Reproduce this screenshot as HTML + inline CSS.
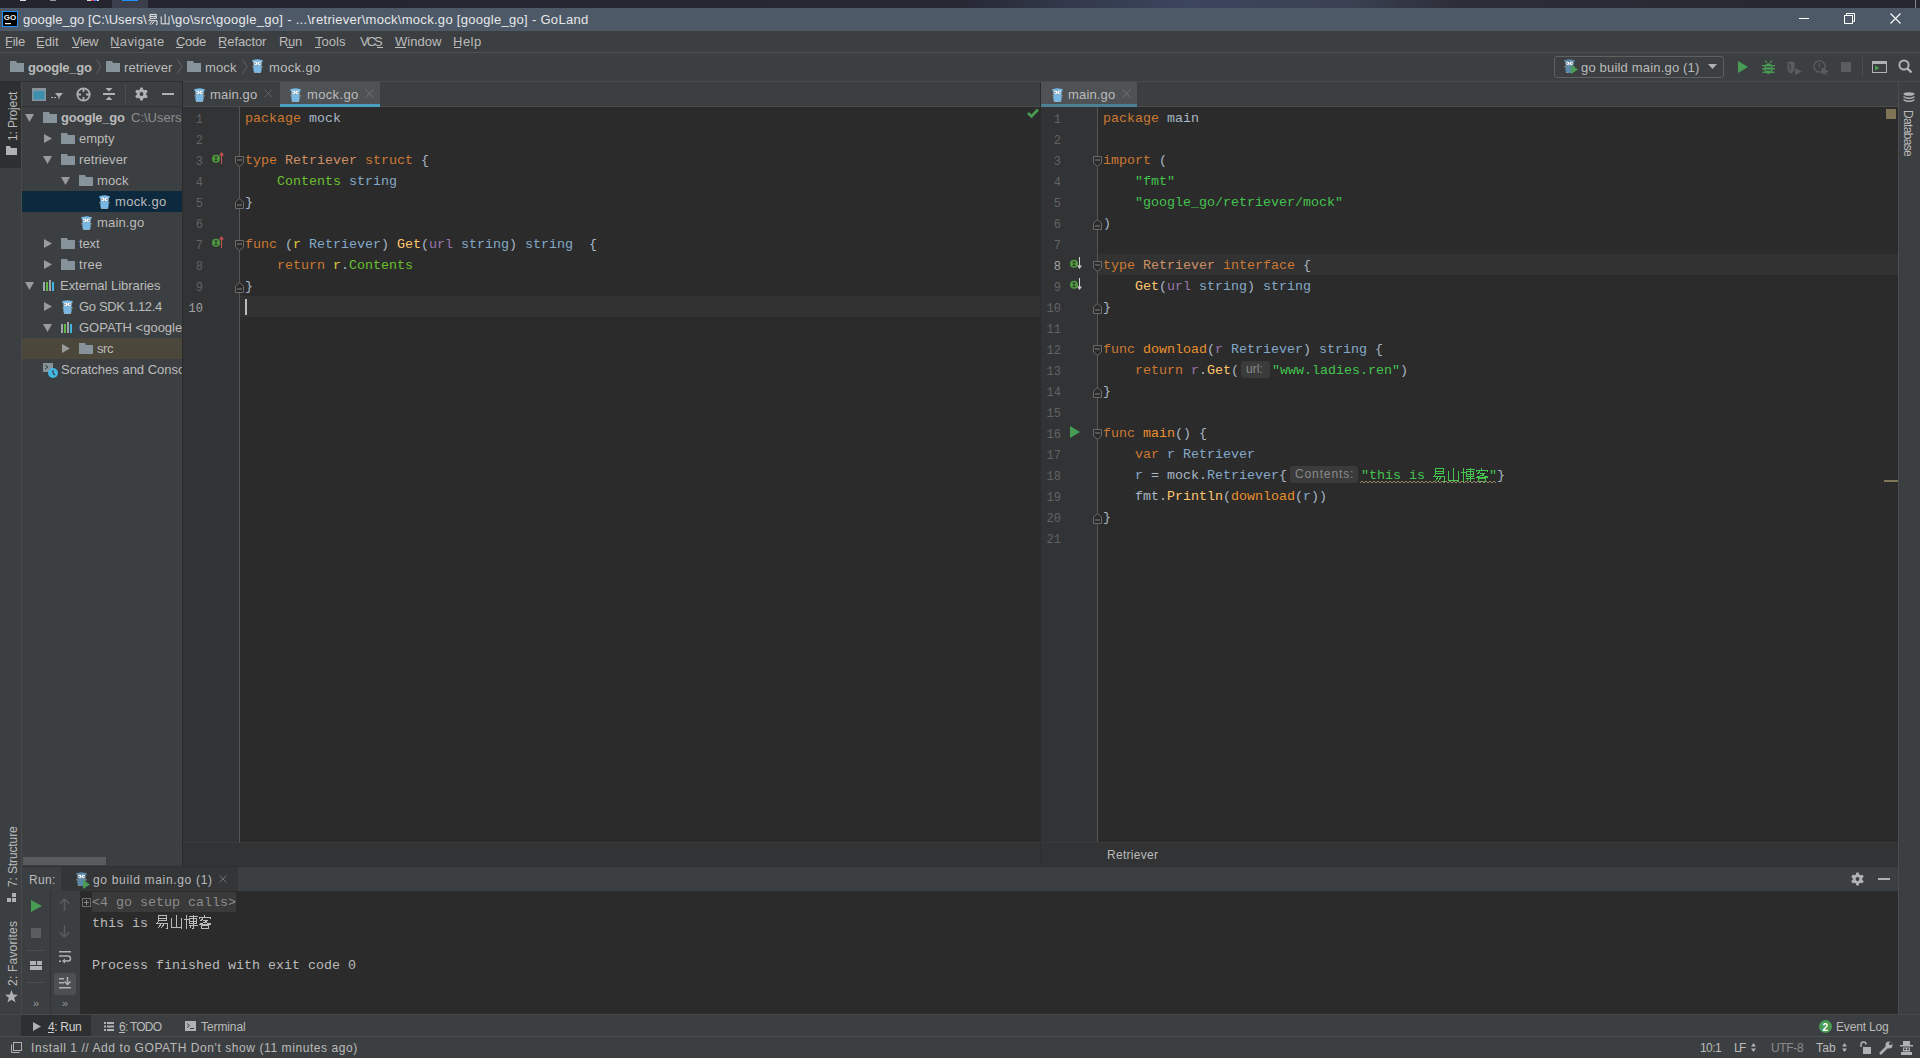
<!DOCTYPE html>
<html><head><meta charset="utf-8">
<style>
*{margin:0;padding:0;box-sizing:border-box}
html,body{width:1920px;height:1058px;overflow:hidden;background:#3c3f41;font-family:"Liberation Sans",sans-serif;color:#bbbbbb}
.a{position:absolute}
.ui{font-family:"Liberation Sans",sans-serif;white-space:pre}
.mono{font-family:"Liberation Mono",monospace;font-size:13.333px;white-space:pre;line-height:21px}
svg{overflow:visible}
</style></head><body>
<div class="a" style="left:0px;top:0px;width:1920px;height:8px;background:linear-gradient(90deg,#23242e 0%,#262834 50%,#333a4c 56%,#3c455e 62%,#3a4152 70%,#2c2d38 76%,#25262f 100%);"></div>
<div class="a" style="left:112px;top:0px;width:36px;height:8px;background:#3b3f4b;"></div>
<div class="a" style="left:122px;top:0px;width:16px;height:1px;background:#1e90ff;"></div>
<div class="a" style="left:20px;top:0px;width:6px;height:1px;background:#dddddd;"></div>
<div class="a" style="left:50px;top:0px;width:6px;height:1px;background:#999;"></div>
<div class="a" style="left:87px;top:0px;width:12px;height:1px;background:#ddd;"></div>
<div class="a" style="left:91px;top:0px;width:3px;height:1px;background:#e04050;"></div>
<div class="a" style="left:94px;top:0px;width:3px;height:1px;background:#4080ff;"></div>
<div class="a" style="left:1915px;top:0px;width:1px;height:8px;background:#888;"></div>
<div class="a" style="left:0px;top:8px;width:1920px;height:23px;background:#4e5968;"></div>
<div class="a" style="left:0px;top:31px;width:1920px;height:21px;background:#3c3f41;"></div>
<div class="a" style="left:0px;top:52px;width:1920px;height:1px;background:#505050;"></div>
<div class="a" style="left:0px;top:53px;width:1920px;height:28px;background:#3c3f41;"></div>
<div class="a" style="left:0px;top:81px;width:183px;height:1px;background:#2f3030;"></div>
<div class="a" style="left:183px;top:81px;width:1737px;height:1px;background:#4a4a4a;"></div>
<div class="a" style="left:0px;top:82px;width:21px;height:955px;background:#3c3f41;"></div>
<div class="a" style="left:0px;top:82px;width:21px;height:86px;background:#2d2f30;"></div>
<div class="a" style="left:21px;top:82px;width:1px;height:932px;background:#4a4a4a;"></div>
<div class="a" style="left:22px;top:82px;width:160px;height:784px;background:#3c3f41;"></div>
<div class="a" style="left:22px;top:106px;width:160px;height:1px;background:#323232;"></div>
<div class="a" style="left:22px;top:191px;width:160px;height:21px;background:#0d293e;"></div>
<div class="a" style="left:22px;top:338px;width:160px;height:21px;background:#4b473b;"></div>
<div class="a" style="left:23px;top:857px;width:83px;height:8px;background:#595b5d;"></div>
<div class="a" style="left:182px;top:82px;width:1px;height:784px;background:#2b2b2b;"></div>
<div class="a" style="left:183px;top:82px;width:857px;height:24px;background:#3c3f41;"></div>
<div class="a" style="left:183px;top:106px;width:857px;height:1px;background:#4a4a4a;"></div>
<div class="a" style="left:280px;top:82px;width:100px;height:22px;background:#4e5254;"></div>
<div class="a" style="left:280px;top:104px;width:100px;height:3px;background:#4a9fc3;"></div>
<div class="a" style="left:183px;top:107px;width:56px;height:735px;background:#313335;"></div>
<div class="a" style="left:239px;top:107px;width:1px;height:735px;background:#555555;"></div>
<div class="a" style="left:240px;top:107px;width:800px;height:735px;background:#2b2b2b;"></div>
<div class="a" style="left:240px;top:296px;width:800px;height:21px;background:#323232;"></div>
<div class="a" style="left:1040px;top:82px;width:1px;height:760px;background:#2b2b2b;"></div>
<div class="a" style="left:1041px;top:82px;width:857px;height:24px;background:#3c3f41;"></div>
<div class="a" style="left:1041px;top:106px;width:857px;height:1px;background:#4a4a4a;"></div>
<div class="a" style="left:1041px;top:82px;width:96px;height:22px;background:#4e5254;"></div>
<div class="a" style="left:1041px;top:104px;width:96px;height:3px;background:#4e8093;"></div>
<div class="a" style="left:1041px;top:107px;width:56px;height:735px;background:#313335;"></div>
<div class="a" style="left:1097px;top:107px;width:1px;height:735px;background:#555555;"></div>
<div class="a" style="left:1098px;top:107px;width:800px;height:735px;background:#2b2b2b;"></div>
<div class="a" style="left:1098px;top:254px;width:800px;height:21px;background:#323232;"></div>
<div class="a" style="left:1886px;top:109px;width:10px;height:10px;background:#7f7456;"></div>
<div class="a" style="left:1884px;top:480px;width:14px;height:2px;background:#7f7757;"></div>
<div class="a" style="left:183px;top:842px;width:1715px;height:24px;background:#313335;"></div>
<div class="a" style="left:183px;top:842px;width:1715px;height:1px;background:#3a3a3a;"></div>
<div class="a" style="left:1040px;top:842px;width:1px;height:24px;background:#2f3030;"></div>
<div class="a" style="left:1898px;top:82px;width:22px;height:932px;background:#3c3f41;"></div>
<div class="a" style="left:1898px;top:82px;width:1px;height:932px;background:#4a4c4e;"></div>
<div class="a" style="left:22px;top:866px;width:1876px;height:1px;background:#2f3030;"></div>
<div class="a" style="left:22px;top:867px;width:1876px;height:24px;background:#3c3f41;"></div>
<div class="a" style="left:61px;top:867px;width:177px;height:24px;background:#333537;"></div>
<div class="a" style="left:22px;top:891px;width:58px;height:123px;background:#3c3f41;"></div>
<div class="a" style="left:50px;top:891px;width:1px;height:123px;background:#333333;"></div>
<div class="a" style="left:80px;top:891px;width:1818px;height:123px;background:#2b2b2b;"></div>
<div class="a" style="left:92px;top:892px;width:144px;height:20px;background:#3a3a3a;"></div>
<div class="a" style="left:54px;top:973px;width:22px;height:22px;background:#4c5052;border-radius:3px"></div>
<div class="a" style="left:0px;top:1014px;width:1920px;height:1px;background:#46484a;"></div>
<div class="a" style="left:0px;top:1015px;width:1920px;height:21px;background:#3c3f41;"></div>
<div class="a" style="left:21px;top:1015px;width:70px;height:21px;background:#2d2f30;"></div>
<div class="a" style="left:0px;top:1036px;width:1920px;height:1px;background:#4a4c4e;"></div>
<div class="a" style="left:0px;top:1037px;width:1920px;height:21px;background:#3c3f41;"></div>
<svg class="a" style="left:2px;top:11px" width="16" height="16" viewBox="0 0 16 16"><rect x="0.5" y="0.5" width="15" height="15" fill="#000" stroke="#1e90ff"/><text x="1.8" y="9" font-family="Liberation Sans" font-weight="bold" font-size="8" fill="#eee">GO</text><rect x="3" y="12" width="6" height="1.2" fill="#eee"/></svg>
<div class="a" style="left:1799px;top:18px;width:10px;height:1px;background:#ffffff;"></div>
<svg class="a" style="left:1844px;top:13px" width="11" height="11" viewBox="0 0 11 11"><rect x="0.5" y="2.5" width="8" height="8" fill="none" stroke="#fff"/><path d="M2.5 2.5 V0.5 H10.5 V8.5 H8.5" fill="none" stroke="#fff"/></svg>
<svg class="a" style="left:1890px;top:13px" width="11" height="11" viewBox="0 0 11 11"><path d="M0.5 0.5 L10.5 10.5 M10.5 0.5 L0.5 10.5" stroke="#fff" stroke-width="1.1"/></svg>
<div class="a" style="left:6px;top:47px;width:6px;height:1px;background:#bbbbbb;"></div>
<div class="a" style="left:37px;top:47px;width:7px;height:1px;background:#bbbbbb;"></div>
<div class="a" style="left:72px;top:47px;width:7px;height:1px;background:#bbbbbb;"></div>
<div class="a" style="left:111px;top:47px;width:9px;height:1px;background:#bbbbbb;"></div>
<div class="a" style="left:176px;top:47px;width:7px;height:1px;background:#bbbbbb;"></div>
<div class="a" style="left:219px;top:47px;width:7px;height:1px;background:#bbbbbb;"></div>
<div class="a" style="left:287px;top:47px;width:6px;height:1px;background:#bbbbbb;"></div>
<div class="a" style="left:315px;top:47px;width:6px;height:1px;background:#bbbbbb;"></div>
<div class="a" style="left:377px;top:47px;width:6px;height:1px;background:#bbbbbb;"></div>
<div class="a" style="left:395px;top:47px;width:11px;height:1px;background:#bbbbbb;"></div>
<div class="a" style="left:454px;top:47px;width:7px;height:1px;background:#bbbbbb;"></div>
<svg class="a" style="left:10px;top:61px" width="14" height="11" viewBox="0 0 14 11"><path d="M0 0 H6 L7 2 H14 V11 H0 Z" fill="#87939a"/></svg>
<svg class="a" style="left:96px;top:59px" width="6" height="15" viewBox="0 0 6 15"><path d="M0.5 0.5 L5 7.5 L0.5 14.5" fill="none" stroke="#5e6060"/></svg>
<svg class="a" style="left:106px;top:61px" width="14" height="11" viewBox="0 0 14 11"><path d="M0 0 H6 L7 2 H14 V11 H0 Z" fill="#87939a"/></svg>
<svg class="a" style="left:177px;top:59px" width="6" height="15" viewBox="0 0 6 15"><path d="M0.5 0.5 L5 7.5 L0.5 14.5" fill="none" stroke="#5e6060"/></svg>
<svg class="a" style="left:187px;top:61px" width="14" height="11" viewBox="0 0 14 11"><path d="M0 0 H6 L7 2 H14 V11 H0 Z" fill="#87939a"/></svg>
<svg class="a" style="left:242px;top:59px" width="6" height="15" viewBox="0 0 6 15"><path d="M0.5 0.5 L5 7.5 L0.5 14.5" fill="none" stroke="#5e6060"/></svg>
<svg class="a" style="left:252px;top:59px" width="11" height="14" viewBox="0 0 11 14"><path d="M0.3 2.2 Q0.3 0.6 1.8 0.9 Q5.5 -0.6 9.2 0.9 Q10.7 0.6 10.7 2.2 Q10.7 3.2 9.6 3.4 V11.2 Q9.6 14 5.5 14 Q1.4 14 1.4 11.2 V3.4 Q0.3 3.2 0.3 2.2 Z" fill="#79b8e3"/><circle cx="3.6" cy="4.3" r="1.7" fill="#fff"/><circle cx="7.4" cy="4.3" r="1.7" fill="#fff"/><rect x="2.6" y="3.6" width="0.9" height="1.5" fill="#333"/><rect x="7.5" y="3.6" width="0.9" height="1.5" fill="#333"/><rect x="4.6" y="5.6" width="1.8" height="1.1" fill="#e8e8e8"/><rect x="4.9" y="6.2" width="1.2" height="0.6" fill="#555"/><rect x="0.4" y="7.2" width="1" height="1.2" fill="#c9a27e"/><rect x="9.6" y="7.2" width="1" height="1.2" fill="#c9a27e"/><rect x="2" y="13" width="1.2" height="1" fill="#c9a27e"/><rect x="7.8" y="13" width="1.2" height="1" fill="#c9a27e"/></svg>
<div class="a" style="left:1554px;top:56px;width:170px;height:22px;background:transparent;border:1px solid #5e6060;border-radius:3px"></div>
<svg class="a" style="left:1564px;top:59px" width="11" height="14" viewBox="0 0 11 14"><path d="M0.3 2.2 Q0.3 0.6 1.8 0.9 Q5.5 -0.6 9.2 0.9 Q10.7 0.6 10.7 2.2 Q10.7 3.2 9.6 3.4 V11.2 Q9.6 14 5.5 14 Q1.4 14 1.4 11.2 V3.4 Q0.3 3.2 0.3 2.2 Z" fill="#5b88a8"/><circle cx="3.6" cy="4.3" r="1.7" fill="#fff"/><circle cx="7.4" cy="4.3" r="1.7" fill="#fff"/><rect x="2.6" y="3.6" width="0.9" height="1.5" fill="#333"/><rect x="7.5" y="3.6" width="0.9" height="1.5" fill="#333"/><rect x="4.6" y="5.6" width="1.8" height="1.1" fill="#e8e8e8"/><rect x="4.9" y="6.2" width="1.2" height="0.6" fill="#555"/><rect x="0.4" y="7.2" width="1" height="1.2" fill="#c9a27e"/><rect x="9.6" y="7.2" width="1" height="1.2" fill="#c9a27e"/><rect x="2" y="13" width="1.2" height="1" fill="#c9a27e"/><rect x="7.8" y="13" width="1.2" height="1" fill="#c9a27e"/></svg>
<svg class="a" style="left:1571px;top:65px" width="7" height="9" viewBox="0 0 7 9"><path d="M0 0 L7 4.5 L0 9 Z" fill="#499c54"/></svg>
<svg class="a" style="left:1708px;top:64px" width="9" height="5" viewBox="0 0 9 5"><path d="M0 0 H9 L4.5 5 Z" fill="#afb1b3"/></svg>
<svg class="a" style="left:1738px;top:61px" width="10" height="12" viewBox="0 0 10 12"><path d="M0 0 L10 6 L0 12 Z" fill="#499c54"/></svg>
<svg class="a" style="left:1762px;top:60px" width="13" height="14" viewBox="0 0 13 14"><g fill="#499c54" stroke="#499c54"><path d="M3 0.5 L5 3 M10 0.5 L8 3" stroke-width="1.2" fill="none"/><ellipse cx="6.5" cy="8.5" rx="4.3" ry="5.2" stroke="none"/><rect x="0" y="5" width="13" height="1.3" stroke="none"/><rect x="0" y="8.3" width="13" height="1.3" stroke="none"/><rect x="0.5" y="11.6" width="12" height="1.3" stroke="none"/></g><rect x="3.5" y="6.3" width="6" height="1.1" fill="#3c3f41"/><rect x="3.5" y="9.6" width="6" height="1.1" fill="#3c3f41"/></svg>
<svg class="a" style="left:1787px;top:61px" width="16" height="14" viewBox="0 0 16 14"><path d="M0.5 1 Q4 0 7.5 1 V7 Q7.5 11 4 12.5 Q0.5 11 0.5 7 Z" fill="#5a5d5f"/><path d="M3 2.5 V9" stroke="#3c3f41" stroke-width="1.3"/><path d="M8 7 L15 10.5 L8 14 Z" fill="#5a5d5f"/></svg>
<svg class="a" style="left:1813px;top:60px" width="17" height="15" viewBox="0 0 17 15"><circle cx="6.5" cy="6.5" r="5.6" fill="none" stroke="#5a5d5f" stroke-width="1.4"/><path d="M6.5 3 V7" stroke="#5a5d5f" fill="none" stroke-width="1.2"/><path d="M8.5 7 L16 12 L12.5 12.5 L14.5 15 L13 15 L11 13 L9 15 Z" fill="#5a5d5f"/></svg>
<div class="a" style="left:1841px;top:62px;width:10px;height:10px;background:#5a5d5f;"></div>
<div class="a" style="left:1862px;top:57px;width:1px;height:20px;background:#4b4d4f;"></div>
<svg class="a" style="left:1872px;top:61px" width="15" height="12" viewBox="0 0 15 12"><rect x="0.5" y="0.5" width="14" height="11" fill="none" stroke="#afb1b3" stroke-width="1"/><rect x="0.5" y="0.5" width="14" height="2.5" fill="#afb1b3"/><path d="M3 4.5 L7.5 7 L3 9.5 Z" fill="#499c54"/></svg>
<svg class="a" style="left:1898px;top:59px" width="15" height="15" viewBox="0 0 15 15"><circle cx="6" cy="6" r="4.6" fill="none" stroke="#afb1b3" stroke-width="2"/><path d="M9.3 9.3 L13.5 13.5" stroke="#afb1b3" stroke-width="2.4"/></svg>
<svg class="a" style="left:6px;top:146px" width="11" height="9" viewBox="0 0 11 9"><path d="M0 0 H4 L5 2 H11 V9 H0 Z" fill="#afb1b3"/></svg>
<svg class="a" style="left:7px;top:893px" width="10" height="9" viewBox="0 0 10 9"><rect x="5" y="0" width="4" height="4" fill="#afb1b3"/><rect x="0" y="5" width="4" height="4" fill="#afb1b3"/><rect x="5" y="5" width="4" height="4" fill="#afb1b3"/></svg>
<svg class="a" style="left:5px;top:990px" width="13" height="13" viewBox="0 0 13 13"><path d="M6.5 0 L8.2 4.6 L13 4.8 L9.2 7.8 L10.6 12.5 L6.5 9.8 L2.4 12.5 L3.8 7.8 L0 4.8 L4.8 4.6 Z" fill="#afb1b3"/></svg>
<svg class="a" style="left:1903px;top:92px" width="12" height="12" viewBox="0 0 12 12"><ellipse cx="6" cy="2" rx="5.5" ry="1.8" fill="#afb1b3"/><path d="M0.5 4 Q6 7 11.5 4 V5.5 Q6 8.5 0.5 5.5 Z M0.5 7 Q6 10 11.5 7 V8.5 Q6 11.5 0.5 8.5 Z" fill="#afb1b3"/></svg>
<svg class="a" style="left:32px;top:88px" width="14" height="13" viewBox="0 0 14 13"><rect x="0" y="0" width="14" height="13" fill="#87939a"/><rect x="1.5" y="3" width="11" height="8.5" fill="#3d8fb0"/></svg>
<div class="a" style="left:51px;top:97px;width:2px;height:1px;background:#afb1b3;"></div>
<div class="a" style="left:54px;top:97px;width:2px;height:1px;background:#afb1b3;"></div>
<svg class="a" style="left:55px;top:93px" width="8" height="6" viewBox="0 0 8 6"><path d="M0 0 H8 L4.5 4 V6 H3.5 V4 Z" fill="#afb1b3"/></svg>
<svg class="a" style="left:76px;top:87px" width="15" height="15" viewBox="0 0 15 15"><circle cx="7.5" cy="7.5" r="6.2" fill="none" stroke="#afb1b3" stroke-width="1.8"/><path d="M7.5 1 V5 M7.5 10 V14 M1 7.5 H5 M10 7.5 H14" stroke="#afb1b3" stroke-width="1.8"/></svg>
<svg class="a" style="left:103px;top:88px" width="12" height="12" viewBox="0 0 12 12"><rect x="0" y="5" width="12" height="2" fill="#afb1b3"/><path d="M2.5 0 H9.5 L6 3.5 Z M2.5 12 H9.5 L6 8.5 Z" fill="#afb1b3"/></svg>
<div class="a" style="left:125px;top:84px;width:1px;height:20px;background:#4b4d4f;"></div>
<svg class="a" style="left:135px;top:87px" width="13" height="14" viewBox="0 0 13 14"><g fill="#afb1b3"><circle cx="6.5" cy="7" r="4.8"/><rect x="5" y="0.5" width="3" height="13" rx="0.8"/><rect x="5" y="0.5" width="3" height="13" rx="0.8" transform="rotate(60 6.5 7)"/><rect x="5" y="0.5" width="3" height="13" rx="0.8" transform="rotate(-60 6.5 7)"/></g><circle cx="6.5" cy="7" r="1.9" fill="#3c3f41"/></svg>
<div class="a" style="left:162px;top:93px;width:12px;height:2px;background:#afb1b3;"></div>
<svg class="a" style="left:25px;top:114px" width="9" height="8" viewBox="0 0 9 8"><path d="M0 0 H9 L4.5 8 Z" fill="#9a9a9a"/></svg>
<svg class="a" style="left:43px;top:112px" width="14" height="11" viewBox="0 0 14 11"><path d="M0 0 H6 L7 2 H14 V11 H0 Z" fill="#87939a"/></svg>
<svg class="a" style="left:44px;top:134px" width="8" height="9" viewBox="0 0 8 9"><path d="M0 0 L8 4.5 L0 9 Z" fill="#9a9a9a"/></svg>
<svg class="a" style="left:61px;top:133px" width="14" height="11" viewBox="0 0 14 11"><path d="M0 0 H6 L7 2 H14 V11 H0 Z" fill="#87939a"/></svg>
<svg class="a" style="left:43px;top:156px" width="9" height="8" viewBox="0 0 9 8"><path d="M0 0 H9 L4.5 8 Z" fill="#9a9a9a"/></svg>
<svg class="a" style="left:61px;top:154px" width="14" height="11" viewBox="0 0 14 11"><path d="M0 0 H6 L7 2 H14 V11 H0 Z" fill="#87939a"/></svg>
<svg class="a" style="left:61px;top:177px" width="9" height="8" viewBox="0 0 9 8"><path d="M0 0 H9 L4.5 8 Z" fill="#9a9a9a"/></svg>
<svg class="a" style="left:79px;top:175px" width="14" height="11" viewBox="0 0 14 11"><path d="M0 0 H6 L7 2 H14 V11 H0 Z" fill="#87939a"/></svg>
<svg class="a" style="left:99px;top:195px" width="11" height="14" viewBox="0 0 11 14"><path d="M0.3 2.2 Q0.3 0.6 1.8 0.9 Q5.5 -0.6 9.2 0.9 Q10.7 0.6 10.7 2.2 Q10.7 3.2 9.6 3.4 V11.2 Q9.6 14 5.5 14 Q1.4 14 1.4 11.2 V3.4 Q0.3 3.2 0.3 2.2 Z" fill="#79b8e3"/><circle cx="3.6" cy="4.3" r="1.7" fill="#fff"/><circle cx="7.4" cy="4.3" r="1.7" fill="#fff"/><rect x="2.6" y="3.6" width="0.9" height="1.5" fill="#333"/><rect x="7.5" y="3.6" width="0.9" height="1.5" fill="#333"/><rect x="4.6" y="5.6" width="1.8" height="1.1" fill="#e8e8e8"/><rect x="4.9" y="6.2" width="1.2" height="0.6" fill="#555"/><rect x="0.4" y="7.2" width="1" height="1.2" fill="#c9a27e"/><rect x="9.6" y="7.2" width="1" height="1.2" fill="#c9a27e"/><rect x="2" y="13" width="1.2" height="1" fill="#c9a27e"/><rect x="7.8" y="13" width="1.2" height="1" fill="#c9a27e"/></svg>
<svg class="a" style="left:81px;top:216px" width="11" height="14" viewBox="0 0 11 14"><path d="M0.3 2.2 Q0.3 0.6 1.8 0.9 Q5.5 -0.6 9.2 0.9 Q10.7 0.6 10.7 2.2 Q10.7 3.2 9.6 3.4 V11.2 Q9.6 14 5.5 14 Q1.4 14 1.4 11.2 V3.4 Q0.3 3.2 0.3 2.2 Z" fill="#79b8e3"/><circle cx="3.6" cy="4.3" r="1.7" fill="#fff"/><circle cx="7.4" cy="4.3" r="1.7" fill="#fff"/><rect x="2.6" y="3.6" width="0.9" height="1.5" fill="#333"/><rect x="7.5" y="3.6" width="0.9" height="1.5" fill="#333"/><rect x="4.6" y="5.6" width="1.8" height="1.1" fill="#e8e8e8"/><rect x="4.9" y="6.2" width="1.2" height="0.6" fill="#555"/><rect x="0.4" y="7.2" width="1" height="1.2" fill="#c9a27e"/><rect x="9.6" y="7.2" width="1" height="1.2" fill="#c9a27e"/><rect x="2" y="13" width="1.2" height="1" fill="#c9a27e"/><rect x="7.8" y="13" width="1.2" height="1" fill="#c9a27e"/></svg>
<svg class="a" style="left:44px;top:239px" width="8" height="9" viewBox="0 0 8 9"><path d="M0 0 L8 4.5 L0 9 Z" fill="#9a9a9a"/></svg>
<svg class="a" style="left:61px;top:238px" width="14" height="11" viewBox="0 0 14 11"><path d="M0 0 H6 L7 2 H14 V11 H0 Z" fill="#87939a"/></svg>
<svg class="a" style="left:44px;top:260px" width="8" height="9" viewBox="0 0 8 9"><path d="M0 0 L8 4.5 L0 9 Z" fill="#9a9a9a"/></svg>
<svg class="a" style="left:61px;top:259px" width="14" height="11" viewBox="0 0 14 11"><path d="M0 0 H6 L7 2 H14 V11 H0 Z" fill="#87939a"/></svg>
<svg class="a" style="left:25px;top:282px" width="9" height="8" viewBox="0 0 9 8"><path d="M0 0 H9 L4.5 8 Z" fill="#9a9a9a"/></svg>
<svg class="a" style="left:43px;top:280px" width="12" height="11" viewBox="0 0 12 11"><rect x="0" y="2" width="2" height="9" fill="#9aa7b0"/><rect x="3" y="2" width="2" height="9" fill="#62b543"/><rect x="6" y="0" width="2" height="11" fill="#9aa7b0"/><rect x="9" y="2" width="2" height="9" fill="#40b6e0"/></svg>
<svg class="a" style="left:44px;top:302px" width="8" height="9" viewBox="0 0 8 9"><path d="M0 0 L8 4.5 L0 9 Z" fill="#9a9a9a"/></svg>
<svg class="a" style="left:62px;top:300px" width="11" height="14" viewBox="0 0 11 14"><path d="M0.3 2.2 Q0.3 0.6 1.8 0.9 Q5.5 -0.6 9.2 0.9 Q10.7 0.6 10.7 2.2 Q10.7 3.2 9.6 3.4 V11.2 Q9.6 14 5.5 14 Q1.4 14 1.4 11.2 V3.4 Q0.3 3.2 0.3 2.2 Z" fill="#79b8e3"/><circle cx="3.6" cy="4.3" r="1.7" fill="#fff"/><circle cx="7.4" cy="4.3" r="1.7" fill="#fff"/><rect x="2.6" y="3.6" width="0.9" height="1.5" fill="#333"/><rect x="7.5" y="3.6" width="0.9" height="1.5" fill="#333"/><rect x="4.6" y="5.6" width="1.8" height="1.1" fill="#e8e8e8"/><rect x="4.9" y="6.2" width="1.2" height="0.6" fill="#555"/><rect x="0.4" y="7.2" width="1" height="1.2" fill="#c9a27e"/><rect x="9.6" y="7.2" width="1" height="1.2" fill="#c9a27e"/><rect x="2" y="13" width="1.2" height="1" fill="#c9a27e"/><rect x="7.8" y="13" width="1.2" height="1" fill="#c9a27e"/></svg>
<svg class="a" style="left:43px;top:324px" width="9" height="8" viewBox="0 0 9 8"><path d="M0 0 H9 L4.5 8 Z" fill="#9a9a9a"/></svg>
<svg class="a" style="left:61px;top:322px" width="12" height="11" viewBox="0 0 12 11"><rect x="0" y="2" width="2" height="9" fill="#9aa7b0"/><rect x="3" y="2" width="2" height="9" fill="#62b543"/><rect x="6" y="0" width="2" height="11" fill="#9aa7b0"/><rect x="9" y="2" width="2" height="9" fill="#40b6e0"/></svg>
<svg class="a" style="left:62px;top:344px" width="8" height="9" viewBox="0 0 8 9"><path d="M0 0 L8 4.5 L0 9 Z" fill="#9a9a9a"/></svg>
<svg class="a" style="left:79px;top:343px" width="14" height="11" viewBox="0 0 14 11"><path d="M0 0 H6 L7 2 H14 V11 H0 Z" fill="#87939a"/></svg>
<svg class="a" style="left:43px;top:363px" width="16" height="16" viewBox="0 0 16 16"><rect x="0" y="0" width="10" height="9" fill="#87939a"/><path d="M2 2 L5 4 L2 6" stroke="#3c3f41" fill="none"/><circle cx="10" cy="10" r="5" fill="#40b6e0"/><path d="M10 7 V10 L12 12" stroke="#3c3f41" fill="none" stroke-width="1.2"/></svg>
<div class="a" style="left:182px;top:82px;width:1px;height:784px;background:#2b2b2b;"></div>
<svg class="a" style="left:194px;top:88px" width="11" height="14" viewBox="0 0 11 14"><path d="M0.3 2.2 Q0.3 0.6 1.8 0.9 Q5.5 -0.6 9.2 0.9 Q10.7 0.6 10.7 2.2 Q10.7 3.2 9.6 3.4 V11.2 Q9.6 14 5.5 14 Q1.4 14 1.4 11.2 V3.4 Q0.3 3.2 0.3 2.2 Z" fill="#79b8e3"/><circle cx="3.6" cy="4.3" r="1.7" fill="#fff"/><circle cx="7.4" cy="4.3" r="1.7" fill="#fff"/><rect x="2.6" y="3.6" width="0.9" height="1.5" fill="#333"/><rect x="7.5" y="3.6" width="0.9" height="1.5" fill="#333"/><rect x="4.6" y="5.6" width="1.8" height="1.1" fill="#e8e8e8"/><rect x="4.9" y="6.2" width="1.2" height="0.6" fill="#555"/><rect x="0.4" y="7.2" width="1" height="1.2" fill="#c9a27e"/><rect x="9.6" y="7.2" width="1" height="1.2" fill="#c9a27e"/><rect x="2" y="13" width="1.2" height="1" fill="#c9a27e"/><rect x="7.8" y="13" width="1.2" height="1" fill="#c9a27e"/></svg>
<svg class="a" style="left:264px;top:89px" width="9" height="9" viewBox="0 0 9 9"><path d="M0.5 0.5 L8.5 8.5 M8.5 0.5 L0.5 8.5" stroke="#5d6163" stroke-width="1"/></svg>
<svg class="a" style="left:290px;top:88px" width="11" height="14" viewBox="0 0 11 14"><path d="M0.3 2.2 Q0.3 0.6 1.8 0.9 Q5.5 -0.6 9.2 0.9 Q10.7 0.6 10.7 2.2 Q10.7 3.2 9.6 3.4 V11.2 Q9.6 14 5.5 14 Q1.4 14 1.4 11.2 V3.4 Q0.3 3.2 0.3 2.2 Z" fill="#79b8e3"/><circle cx="3.6" cy="4.3" r="1.7" fill="#fff"/><circle cx="7.4" cy="4.3" r="1.7" fill="#fff"/><rect x="2.6" y="3.6" width="0.9" height="1.5" fill="#333"/><rect x="7.5" y="3.6" width="0.9" height="1.5" fill="#333"/><rect x="4.6" y="5.6" width="1.8" height="1.1" fill="#e8e8e8"/><rect x="4.9" y="6.2" width="1.2" height="0.6" fill="#555"/><rect x="0.4" y="7.2" width="1" height="1.2" fill="#c9a27e"/><rect x="9.6" y="7.2" width="1" height="1.2" fill="#c9a27e"/><rect x="2" y="13" width="1.2" height="1" fill="#c9a27e"/><rect x="7.8" y="13" width="1.2" height="1" fill="#c9a27e"/></svg>
<svg class="a" style="left:365px;top:89px" width="9" height="9" viewBox="0 0 9 9"><path d="M0.5 0.5 L8.5 8.5 M8.5 0.5 L0.5 8.5" stroke="#6e7274" stroke-width="1"/></svg>
<svg class="a" style="left:1052px;top:88px" width="11" height="14" viewBox="0 0 11 14"><path d="M0.3 2.2 Q0.3 0.6 1.8 0.9 Q5.5 -0.6 9.2 0.9 Q10.7 0.6 10.7 2.2 Q10.7 3.2 9.6 3.4 V11.2 Q9.6 14 5.5 14 Q1.4 14 1.4 11.2 V3.4 Q0.3 3.2 0.3 2.2 Z" fill="#79b8e3"/><circle cx="3.6" cy="4.3" r="1.7" fill="#fff"/><circle cx="7.4" cy="4.3" r="1.7" fill="#fff"/><rect x="2.6" y="3.6" width="0.9" height="1.5" fill="#333"/><rect x="7.5" y="3.6" width="0.9" height="1.5" fill="#333"/><rect x="4.6" y="5.6" width="1.8" height="1.1" fill="#e8e8e8"/><rect x="4.9" y="6.2" width="1.2" height="0.6" fill="#555"/><rect x="0.4" y="7.2" width="1" height="1.2" fill="#c9a27e"/><rect x="9.6" y="7.2" width="1" height="1.2" fill="#c9a27e"/><rect x="2" y="13" width="1.2" height="1" fill="#c9a27e"/><rect x="7.8" y="13" width="1.2" height="1" fill="#c9a27e"/></svg>
<svg class="a" style="left:1122px;top:89px" width="9" height="9" viewBox="0 0 9 9"><path d="M0.5 0.5 L8.5 8.5 M8.5 0.5 L0.5 8.5" stroke="#6e7274" stroke-width="1"/></svg>
<div class="a mono" style="left:175px;top:110px;width:28px;text-align:right;color:#606366;font-size:12px;line-height:21px">1</div>
<div class="a mono" style="left:175px;top:131px;width:28px;text-align:right;color:#606366;font-size:12px;line-height:21px">2</div>
<div class="a mono" style="left:175px;top:152px;width:28px;text-align:right;color:#606366;font-size:12px;line-height:21px">3</div>
<div class="a mono" style="left:175px;top:173px;width:28px;text-align:right;color:#606366;font-size:12px;line-height:21px">4</div>
<div class="a mono" style="left:175px;top:194px;width:28px;text-align:right;color:#606366;font-size:12px;line-height:21px">5</div>
<div class="a mono" style="left:175px;top:215px;width:28px;text-align:right;color:#606366;font-size:12px;line-height:21px">6</div>
<div class="a mono" style="left:175px;top:236px;width:28px;text-align:right;color:#606366;font-size:12px;line-height:21px">7</div>
<div class="a mono" style="left:175px;top:257px;width:28px;text-align:right;color:#606366;font-size:12px;line-height:21px">8</div>
<div class="a mono" style="left:175px;top:278px;width:28px;text-align:right;color:#606366;font-size:12px;line-height:21px">9</div>
<div class="a mono" style="left:175px;top:299px;width:28px;text-align:right;color:#a4a3a3;font-size:12px;line-height:21px">10</div>
<div class="a mono" style="left:245px;top:108px"><span style="color:#cc7832">package </span><span style="color:#a9b7c6">mock</span></div>
<div class="a mono" style="left:245px;top:150px"><span style="color:#cc7832">type </span><span style="color:#cf9066">Retriever </span><span style="color:#cc7832">struct </span><span style="color:#a9b7c6">{</span></div>
<div class="a mono" style="left:245px;top:171px"><span style="color:#a9b7c6">    </span><span style="color:#6ac02e">Contents </span><span style="color:#84a9c9">string</span></div>
<div class="a mono" style="left:245px;top:192px"><span style="color:#a9b7c6">}</span></div>
<div class="a mono" style="left:245px;top:234px"><span style="color:#cc7832">func </span><span style="color:#a9b7c6">(</span><span style="color:#e0c83a">r </span><span style="color:#84a9c9">Retriever</span><span style="color:#a9b7c6">) </span><span style="color:#ffc66d">Get</span><span style="color:#a9b7c6">(</span><span style="color:#9876aa">url </span><span style="color:#84a9c9">string</span><span style="color:#a9b7c6">) </span><span style="color:#84a9c9">string</span><span style="color:#a9b7c6">  {</span></div>
<div class="a mono" style="left:245px;top:255px"><span style="color:#a9b7c6">    </span><span style="color:#cc7832">return </span><span style="color:#e0c83a">r</span><span style="color:#a9b7c6">.</span><span style="color:#6ac02e">Contents</span></div>
<div class="a mono" style="left:245px;top:276px"><span style="color:#a9b7c6">}</span></div>
<div class="a" style="left:245px;top:299px;width:2px;height:16px;background:#bbbbbb;"></div>
<svg class="a" style="left:234.5px;top:156px" width="9" height="11" viewBox="0 0 9 11"><path d="M0.5 0.5 H8.5 V7 L4.5 10.5 L0.5 7 Z" fill="#2b2b2b" stroke="#6a6a6a"/><rect x="2" y="3.5" width="5" height="1" fill="#808080"/></svg>
<svg class="a" style="left:234.5px;top:198px" width="9" height="11" viewBox="0 0 9 11"><path d="M0.5 10.5 V4 L4.5 0.5 L8.5 4 V10.5 Z" fill="#2b2b2b" stroke="#6a6a6a"/><rect x="2" y="6.5" width="5" height="1" fill="#808080"/></svg>
<svg class="a" style="left:234.5px;top:240px" width="9" height="11" viewBox="0 0 9 11"><path d="M0.5 0.5 H8.5 V7 L4.5 10.5 L0.5 7 Z" fill="#2b2b2b" stroke="#6a6a6a"/><rect x="2" y="3.5" width="5" height="1" fill="#808080"/></svg>
<svg class="a" style="left:234.5px;top:282px" width="9" height="11" viewBox="0 0 9 11"><path d="M0.5 10.5 V4 L4.5 0.5 L8.5 4 V10.5 Z" fill="#2b2b2b" stroke="#6a6a6a"/><rect x="2" y="6.5" width="5" height="1" fill="#808080"/></svg>
<svg class="a" style="left:212px;top:152px" width="12" height="13" viewBox="0 0 12 13"><circle cx="4" cy="6.8" r="4" fill="#4e9a3f"/><rect x="2.5" y="4.6" width="3" height="0.9" fill="#2b2b2b"/><rect x="3.55" y="4.6" width="0.9" height="4.4" fill="#2b2b2b"/><rect x="2.5" y="8.2" width="3" height="0.9" fill="#2b2b2b"/><path d="M9.5 0 L12 3.5 H10 V12 H9 V3.5 H7 Z" fill="#c75450"/></svg>
<svg class="a" style="left:212px;top:236px" width="12" height="13" viewBox="0 0 12 13"><circle cx="4" cy="6.8" r="4" fill="#4e9a3f"/><rect x="2.5" y="4.6" width="3" height="0.9" fill="#2b2b2b"/><rect x="3.55" y="4.6" width="0.9" height="4.4" fill="#2b2b2b"/><rect x="2.5" y="8.2" width="3" height="0.9" fill="#2b2b2b"/><path d="M9.5 0 L12 3.5 H10 V12 H9 V3.5 H7 Z" fill="#c75450"/></svg>
<svg class="a" style="left:1027px;top:108px" width="12" height="10" viewBox="0 0 12 10"><path d="M1 5 L4.5 8.5 L11 1.5" fill="none" stroke="#499c54" stroke-width="2.6"/></svg>
<div class="a mono" style="left:1033px;top:110px;width:28px;text-align:right;color:#606366;font-size:12px;line-height:21px">1</div>
<div class="a mono" style="left:1033px;top:131px;width:28px;text-align:right;color:#606366;font-size:12px;line-height:21px">2</div>
<div class="a mono" style="left:1033px;top:152px;width:28px;text-align:right;color:#606366;font-size:12px;line-height:21px">3</div>
<div class="a mono" style="left:1033px;top:173px;width:28px;text-align:right;color:#606366;font-size:12px;line-height:21px">4</div>
<div class="a mono" style="left:1033px;top:194px;width:28px;text-align:right;color:#606366;font-size:12px;line-height:21px">5</div>
<div class="a mono" style="left:1033px;top:215px;width:28px;text-align:right;color:#606366;font-size:12px;line-height:21px">6</div>
<div class="a mono" style="left:1033px;top:236px;width:28px;text-align:right;color:#606366;font-size:12px;line-height:21px">7</div>
<div class="a mono" style="left:1033px;top:257px;width:28px;text-align:right;color:#a4a3a3;font-size:12px;line-height:21px">8</div>
<div class="a mono" style="left:1033px;top:278px;width:28px;text-align:right;color:#606366;font-size:12px;line-height:21px">9</div>
<div class="a mono" style="left:1033px;top:299px;width:28px;text-align:right;color:#606366;font-size:12px;line-height:21px">10</div>
<div class="a mono" style="left:1033px;top:320px;width:28px;text-align:right;color:#606366;font-size:12px;line-height:21px">11</div>
<div class="a mono" style="left:1033px;top:341px;width:28px;text-align:right;color:#606366;font-size:12px;line-height:21px">12</div>
<div class="a mono" style="left:1033px;top:362px;width:28px;text-align:right;color:#606366;font-size:12px;line-height:21px">13</div>
<div class="a mono" style="left:1033px;top:383px;width:28px;text-align:right;color:#606366;font-size:12px;line-height:21px">14</div>
<div class="a mono" style="left:1033px;top:404px;width:28px;text-align:right;color:#606366;font-size:12px;line-height:21px">15</div>
<div class="a mono" style="left:1033px;top:425px;width:28px;text-align:right;color:#606366;font-size:12px;line-height:21px">16</div>
<div class="a mono" style="left:1033px;top:446px;width:28px;text-align:right;color:#606366;font-size:12px;line-height:21px">17</div>
<div class="a mono" style="left:1033px;top:467px;width:28px;text-align:right;color:#606366;font-size:12px;line-height:21px">18</div>
<div class="a mono" style="left:1033px;top:488px;width:28px;text-align:right;color:#606366;font-size:12px;line-height:21px">19</div>
<div class="a mono" style="left:1033px;top:509px;width:28px;text-align:right;color:#606366;font-size:12px;line-height:21px">20</div>
<div class="a mono" style="left:1033px;top:530px;width:28px;text-align:right;color:#606366;font-size:12px;line-height:21px">21</div>
<div class="a mono" style="left:1103px;top:108px"><span style="color:#cc7832">package </span><span style="color:#a9b7c6">main</span></div>
<div class="a mono" style="left:1103px;top:150px"><span style="color:#cc7832">import </span><span style="color:#a9b7c6">(</span></div>
<div class="a mono" style="left:1103px;top:171px"><span style="color:#a9b7c6">    </span><span style="color:#44c44e">&quot;fmt&quot;</span></div>
<div class="a mono" style="left:1103px;top:192px"><span style="color:#a9b7c6">    </span><span style="color:#44c44e">&quot;google_go/retriever/mock&quot;</span></div>
<div class="a mono" style="left:1103px;top:213px"><span style="color:#a9b7c6">)</span></div>
<div class="a mono" style="left:1103px;top:255px"><span style="color:#cc7832">type </span><span style="color:#cf9066">Retriever </span><span style="color:#cc7832">interface </span><span style="color:#a9b7c6">{</span></div>
<div class="a mono" style="left:1103px;top:276px"><span style="color:#a9b7c6">    </span><span style="color:#ffc66d">Get</span><span style="color:#a9b7c6">(</span><span style="color:#9876aa">url </span><span style="color:#84a9c9">string</span><span style="color:#a9b7c6">) </span><span style="color:#84a9c9">string</span></div>
<div class="a mono" style="left:1103px;top:297px"><span style="color:#a9b7c6">}</span></div>
<div class="a mono" style="left:1103px;top:339px"><span style="color:#cc7832">func </span><span style="color:#e98f2c">download</span><span style="color:#a9b7c6">(</span><span style="color:#9876aa">r </span><span style="color:#84a9c9">Retriever</span><span style="color:#a9b7c6">) </span><span style="color:#84a9c9">string </span><span style="color:#a9b7c6">{</span></div>
<div class="a mono" style="left:1103px;top:360px"><span style="color:#a9b7c6">    </span><span style="color:#cc7832">return </span><span style="color:#9876aa">r</span><span style="color:#a9b7c6">.</span><span style="color:#ffc66d">Get</span><span style="color:#a9b7c6">(</span></div>
<div class="a" style="left:1241px;top:361px;width:29px;height:17px;background:#3b3b3b;border-radius:3px"></div>
<div class="a mono" style="left:1272px;top:360px"><span style="color:#44c44e">&quot;www.ladies.ren&quot;</span><span style="color:#a9b7c6">)</span></div>
<div class="a mono" style="left:1103px;top:381px"><span style="color:#a9b7c6">}</span></div>
<div class="a mono" style="left:1103px;top:423px"><span style="color:#cc7832">func </span><span style="color:#e98f2c">main</span><span style="color:#a9b7c6">() {</span></div>
<div class="a mono" style="left:1103px;top:444px"><span style="color:#a9b7c6">    </span><span style="color:#cc7832">var </span><span style="color:#84a9c9">r </span><span style="color:#84a9c9">Retriever</span></div>
<div class="a mono" style="left:1103px;top:465px"><span style="color:#a9b7c6">    </span><span style="color:#84a9c9">r </span><span style="color:#a9b7c6">= </span><span style="color:#a9b7c6">mock</span><span style="color:#a9b7c6">.</span><span style="color:#84a9c9">Retriever</span><span style="color:#a9b7c6">{</span></div>
<div class="a" style="left:1290px;top:466px;width:68px;height:17px;background:#3b3b3b;border-radius:3px"></div>
<div class="a mono" style="left:1361px;top:465px"><span style="color:#44c44e">&quot;this is </span></div>
<div class="a mono" style="left:1489px;top:465px"><span style="color:#44c44e">&quot;</span><span style="color:#a9b7c6">}</span></div>
<div class="a mono" style="left:1103px;top:486px"><span style="color:#a9b7c6">    </span><span style="color:#a9b7c6">fmt</span><span style="color:#a9b7c6">.</span><span style="color:#ffc66d">Println</span><span style="color:#a9b7c6">(</span><span style="color:#e98f2c">download</span><span style="color:#a9b7c6">(</span><span style="color:#84a9c9">r</span><span style="color:#a9b7c6">))</span></div>
<div class="a mono" style="left:1103px;top:507px"><span style="color:#a9b7c6">}</span></div>
<svg class="a" style="left:1092.5px;top:156px" width="9" height="11" viewBox="0 0 9 11"><path d="M0.5 0.5 H8.5 V7 L4.5 10.5 L0.5 7 Z" fill="#2b2b2b" stroke="#6a6a6a"/><rect x="2" y="3.5" width="5" height="1" fill="#808080"/></svg>
<svg class="a" style="left:1092.5px;top:219px" width="9" height="11" viewBox="0 0 9 11"><path d="M0.5 10.5 V4 L4.5 0.5 L8.5 4 V10.5 Z" fill="#2b2b2b" stroke="#6a6a6a"/><rect x="2" y="6.5" width="5" height="1" fill="#808080"/></svg>
<svg class="a" style="left:1092.5px;top:261px" width="9" height="11" viewBox="0 0 9 11"><path d="M0.5 0.5 H8.5 V7 L4.5 10.5 L0.5 7 Z" fill="#2b2b2b" stroke="#6a6a6a"/><rect x="2" y="3.5" width="5" height="1" fill="#808080"/></svg>
<svg class="a" style="left:1092.5px;top:303px" width="9" height="11" viewBox="0 0 9 11"><path d="M0.5 10.5 V4 L4.5 0.5 L8.5 4 V10.5 Z" fill="#2b2b2b" stroke="#6a6a6a"/><rect x="2" y="6.5" width="5" height="1" fill="#808080"/></svg>
<svg class="a" style="left:1092.5px;top:345px" width="9" height="11" viewBox="0 0 9 11"><path d="M0.5 0.5 H8.5 V7 L4.5 10.5 L0.5 7 Z" fill="#2b2b2b" stroke="#6a6a6a"/><rect x="2" y="3.5" width="5" height="1" fill="#808080"/></svg>
<svg class="a" style="left:1092.5px;top:387px" width="9" height="11" viewBox="0 0 9 11"><path d="M0.5 10.5 V4 L4.5 0.5 L8.5 4 V10.5 Z" fill="#2b2b2b" stroke="#6a6a6a"/><rect x="2" y="6.5" width="5" height="1" fill="#808080"/></svg>
<svg class="a" style="left:1092.5px;top:429px" width="9" height="11" viewBox="0 0 9 11"><path d="M0.5 0.5 H8.5 V7 L4.5 10.5 L0.5 7 Z" fill="#2b2b2b" stroke="#6a6a6a"/><rect x="2" y="3.5" width="5" height="1" fill="#808080"/></svg>
<svg class="a" style="left:1092.5px;top:513px" width="9" height="11" viewBox="0 0 9 11"><path d="M0.5 10.5 V4 L4.5 0.5 L8.5 4 V10.5 Z" fill="#2b2b2b" stroke="#6a6a6a"/><rect x="2" y="6.5" width="5" height="1" fill="#808080"/></svg>
<svg class="a" style="left:1070px;top:257px" width="12" height="13" viewBox="0 0 12 13"><circle cx="4" cy="6.8" r="4" fill="#4e9a3f"/><rect x="2.5" y="4.6" width="3" height="0.9" fill="#2b2b2b"/><rect x="3.55" y="4.6" width="0.9" height="4.4" fill="#2b2b2b"/><rect x="2.5" y="8.2" width="3" height="0.9" fill="#2b2b2b"/><path d="M9.5 12 L12 8.5 H10 V0 H9 V8.5 H7 Z" fill="#d0d0d0"/></svg>
<svg class="a" style="left:1070px;top:278px" width="12" height="13" viewBox="0 0 12 13"><circle cx="4" cy="6.8" r="4" fill="#4e9a3f"/><rect x="2.5" y="4.6" width="3" height="0.9" fill="#2b2b2b"/><rect x="3.55" y="4.6" width="0.9" height="4.4" fill="#2b2b2b"/><rect x="2.5" y="8.2" width="3" height="0.9" fill="#2b2b2b"/><path d="M9.5 12 L12 8.5 H10 V0 H9 V8.5 H7 Z" fill="#d0d0d0"/></svg>
<svg class="a" style="left:1070px;top:426px" width="10" height="12" viewBox="0 0 10 12"><path d="M0 0 L10 6 L0 12 Z" fill="#499c54"/></svg>
<svg class="a" style="left:76px;top:872px" width="11" height="14" viewBox="0 0 11 14"><path d="M0.3 2.2 Q0.3 0.6 1.8 0.9 Q5.5 -0.6 9.2 0.9 Q10.7 0.6 10.7 2.2 Q10.7 3.2 9.6 3.4 V11.2 Q9.6 14 5.5 14 Q1.4 14 1.4 11.2 V3.4 Q0.3 3.2 0.3 2.2 Z" fill="#5b88a8"/><circle cx="3.6" cy="4.3" r="1.7" fill="#fff"/><circle cx="7.4" cy="4.3" r="1.7" fill="#fff"/><rect x="2.6" y="3.6" width="0.9" height="1.5" fill="#333"/><rect x="7.5" y="3.6" width="0.9" height="1.5" fill="#333"/><rect x="4.6" y="5.6" width="1.8" height="1.1" fill="#e8e8e8"/><rect x="4.9" y="6.2" width="1.2" height="0.6" fill="#555"/><rect x="0.4" y="7.2" width="1" height="1.2" fill="#c9a27e"/><rect x="9.6" y="7.2" width="1" height="1.2" fill="#c9a27e"/><rect x="2" y="13" width="1.2" height="1" fill="#c9a27e"/><rect x="7.8" y="13" width="1.2" height="1" fill="#c9a27e"/></svg>
<svg class="a" style="left:83px;top:880px" width="7" height="9" viewBox="0 0 7 9"><path d="M0 0 L7 4.5 L0 9 Z" fill="#499c54"/></svg>
<svg class="a" style="left:219px;top:875px" width="8" height="8" viewBox="0 0 8 8"><path d="M0.5 0.5 L7.5 7.5 M7.5 0.5 L0.5 7.5" stroke="#6e7274"/></svg>
<svg class="a" style="left:1851px;top:872px" width="13" height="14" viewBox="0 0 13 14"><g fill="#afb1b3"><circle cx="6.5" cy="7" r="4.8"/><rect x="5" y="0.5" width="3" height="13" rx="0.8"/><rect x="5" y="0.5" width="3" height="13" rx="0.8" transform="rotate(60 6.5 7)"/><rect x="5" y="0.5" width="3" height="13" rx="0.8" transform="rotate(-60 6.5 7)"/></g><circle cx="6.5" cy="7" r="1.9" fill="#3c3f41"/></svg>
<div class="a" style="left:1878px;top:878px;width:12px;height:2px;background:#afb1b3;"></div>
<svg class="a" style="left:31px;top:900px" width="11" height="12" viewBox="0 0 11 12"><path d="M0 0 L11 6 L0 12 Z" fill="#499c54"/></svg>
<div class="a" style="left:31px;top:928px;width:10px;height:10px;background:#5a5d5f;"></div>
<div class="a" style="left:26px;top:950px;width:18px;height:1px;background:#4b4d4f;"></div>
<svg class="a" style="left:30px;top:961px" width="12" height="10" viewBox="0 0 12 10"><rect x="0" y="0" width="6" height="4" fill="#afb1b3"/><rect x="7" y="0" width="5" height="4" fill="#afb1b3"/><rect x="0" y="5" width="12" height="4" fill="#afb1b3"/></svg>
<div class="a" style="left:26px;top:982px;width:18px;height:1px;background:#4b4d4f;"></div>
<svg class="a" style="left:59px;top:899px" width="11" height="12" viewBox="0 0 11 12"><path d="M5.5 0 L10 4.5 M5.5 0 L1 4.5 M5.5 0 V12" stroke="#5a5d5f" stroke-width="1.5" fill="none"/></svg>
<svg class="a" style="left:59px;top:925px" width="11" height="12" viewBox="0 0 11 12"><path d="M5.5 12 L10 7.5 M5.5 12 L1 7.5 M5.5 0 V12" stroke="#5a5d5f" stroke-width="1.5" fill="none"/></svg>
<svg class="a" style="left:59px;top:951px" width="12" height="13" viewBox="0 0 12 13"><rect x="0" y="0" width="12" height="1.5" fill="#afb1b3"/><path d="M0 5 H9 Q11.5 5 11.5 7.5 Q11.5 10 9 10 H5" stroke="#afb1b3" stroke-width="1.5" fill="none"/><path d="M6 7.5 L3 10 L6 12.5 Z" fill="#afb1b3"/><rect x="0" y="9.5" width="2" height="1.5" fill="#afb1b3"/></svg>
<svg class="a" style="left:59px;top:977px" width="12" height="12" viewBox="0 0 12 12"><rect x="0" y="1" width="5" height="1.5" fill="#afb1b3"/><rect x="0" y="5" width="5" height="1.5" fill="#afb1b3"/><rect x="0" y="10" width="12" height="1.5" fill="#afb1b3"/><path d="M8.5 0 V7 M5.5 4.5 L8.5 7.5 L11.5 4.5" stroke="#afb1b3" stroke-width="1.5" fill="none"/></svg>
<svg class="a" style="left:82px;top:898px" width="9" height="9" viewBox="0 0 9 9"><rect x="0.5" y="0.5" width="8" height="8" fill="none" stroke="#6e6e6e"/><path d="M2 4.5 H7 M4.5 2 V7" stroke="#8a8a8a"/></svg>
<div class="a mono" style="left:92px;top:892px"><span style="color:#8c8c8c">&lt;4 go setup calls&gt;</span></div>
<div class="a mono" style="left:92px;top:913px"><span style="color:#bbbbbb">this is </span></div>
<div class="a mono" style="left:92px;top:955px"><span style="color:#bbbbbb">Process finished with exit code 0</span></div>
<svg class="a" style="left:33px;top:1022px" width="8" height="9" viewBox="0 0 8 9"><path d="M0 0 L8 4.5 L0 9 Z" fill="#afb1b3"/></svg>
<div class="a" style="left:48px;top:1032px;width:6px;height:1px;background:#d0d0d0;"></div>
<svg class="a" style="left:104px;top:1022px" width="10" height="9" viewBox="0 0 10 9"><g fill="#afb1b3"><rect x="0" y="0" width="2" height="2"/><rect x="3" y="0" width="7" height="2"/><rect x="0" y="3.5" width="2" height="2"/><rect x="3" y="3.5" width="7" height="2"/><rect x="0" y="7" width="2" height="2"/><rect x="3" y="7" width="7" height="2"/></g></svg>
<div class="a" style="left:119px;top:1032px;width:6px;height:1px;background:#bbbbbb;"></div>
<svg class="a" style="left:185px;top:1021px" width="11" height="10" viewBox="0 0 11 10"><rect x="0" y="0" width="11" height="10" fill="#afb1b3"/><path d="M2 2.5 L4.5 4.5 L2 6.5" stroke="#3c3f41" fill="none"/><rect x="5" y="7" width="4" height="1" fill="#3c3f41"/></svg>
<svg class="a" style="left:1819px;top:1020px" width="13" height="13" viewBox="0 0 13 13"><circle cx="6.5" cy="6.5" r="6.5" fill="#499c54"/><text x="3.5" y="10.5" font-family="Liberation Sans" font-size="10" font-weight="bold" fill="#fff">2</text></svg>
<svg class="a" style="left:10px;top:1042px" width="12" height="12" viewBox="0 0 12 12"><rect x="3.5" y="0.5" width="8" height="8" fill="none" stroke="#afb1b3"/><path d="M1.5 2.5 V10.5 H9.5" fill="none" stroke="#afb1b3"/></svg>
<svg class="a" style="left:1751px;top:1043px" width="5" height="9" viewBox="0 0 5 9"><path d="M0 3.5 L2.5 0 L5 3.5 Z M0 5.5 L2.5 9 L5 5.5 Z" fill="#afb1b3"/></svg>
<svg class="a" style="left:1842px;top:1043px" width="5" height="9" viewBox="0 0 5 9"><path d="M0 3.5 L2.5 0 L5 3.5 Z M0 5.5 L2.5 9 L5 5.5 Z" fill="#afb1b3"/></svg>
<svg class="a" style="left:1859px;top:1041px" width="12" height="13" viewBox="0 0 12 13"><path d="M2 6 V3.5 Q2 1 4.5 1 Q7 1 7 3.5" fill="none" stroke="#afb1b3" stroke-width="1.5"/><rect x="4" y="6" width="8" height="7" fill="#afb1b3"/></svg>
<svg class="a" style="left:1879px;top:1041px" width="14" height="14" viewBox="0 0 14 14"><path d="M1 13 L8 6" stroke="#afb1b3" stroke-width="2.5"/><circle cx="10" cy="4" r="3.5" fill="#afb1b3"/><circle cx="11.5" cy="2.5" r="1.6" fill="#3c3f41"/></svg>
<svg class="a" style="left:1900px;top:1041px" width="13" height="14" viewBox="0 0 13 14"><g fill="#afb1b3"><rect x="3" y="0" width="7" height="4"/><rect x="0" y="4" width="13" height="1.5"/><rect x="3" y="6.5" width="7" height="4"/><rect x="1" y="11" width="11" height="3"/></g><rect x="4" y="7.5" width="2" height="1.5" fill="#3c3f41"/><rect x="7" y="7.5" width="2" height="1.5" fill="#3c3f41"/></svg>
<svg class="a" style="left:148px;top:14px" width="11" height="11" viewBox="0 0 14 14"><path d="M2.5 0.5 H10.5 V5.5 H2.5 Z M2.5 3 H10.5 M3 6 L0.5 9 M2 8.5 H11.5 V13.5 H10 M5 9.5 L1.5 13.5 M8 9.5 L4.5 13.5" stroke="#e8e8e8" stroke-width="1.27" fill="none"/></svg>
<svg class="a" style="left:160px;top:14px" width="11" height="11" viewBox="0 0 14 14"><path d="M6.5 0 V12.5 M1.5 3 V12.5 H11.5 M11.5 3 V13.5" stroke="#e8e8e8" stroke-width="1.27" fill="none"/></svg>
<svg class="a" style="left:1433px;top:468px" width="14" height="14" viewBox="0 0 14 14" shape-rendering="crispEdges"><path d="M2.5 0.5 H10.5 V5.5 H2.5 Z M2.5 3 H10.5 M3 6 L0.5 9 M2 8.5 H11.5 V13.5 H10 M5 9.5 L1.5 13.5 M8 9.5 L4.5 13.5" stroke="#44c44e" stroke-width="1" fill="none"/></svg>
<svg class="a" style="left:1447px;top:468px" width="14" height="14" viewBox="0 0 14 14" shape-rendering="crispEdges"><path d="M6.5 0 V12.5 M1.5 3 V12.5 H11.5 M11.5 3 V13.5" stroke="#44c44e" stroke-width="1" fill="none"/></svg>
<svg class="a" style="left:1461px;top:468px" width="14" height="14" viewBox="0 0 14 14" shape-rendering="crispEdges"><path d="M2.5 0 V14 M0 4.5 H4.5 M5 1.5 H13.5 M5.5 3.5 H12.5 V8.5 H5.5 Z M5.5 6 H12.5 M9 0 V13.5 H7.5 M4.5 10.5 H13.5 M6 11.5 L7 12.5" stroke="#44c44e" stroke-width="1" fill="none"/></svg>
<svg class="a" style="left:1475px;top:468px" width="14" height="14" viewBox="0 0 14 14" shape-rendering="crispEdges"><path d="M6.5 0 V1.5 M1.5 4 V2.5 H12.5 V4 M5 3.5 L2.5 6 M4.5 5 H10 L7 7.5 L2 9 M6 7 L12.5 9 M1 9.5 H13 M3.5 10.5 H10.5 V13.5 H3.5 Z" stroke="#44c44e" stroke-width="1" fill="none"/></svg>
<svg class="a" style="left:156px;top:915px" width="14" height="14" viewBox="0 0 14 14" shape-rendering="crispEdges"><path d="M2.5 0.5 H10.5 V5.5 H2.5 Z M2.5 3 H10.5 M3 6 L0.5 9 M2 8.5 H11.5 V13.5 H10 M5 9.5 L1.5 13.5 M8 9.5 L4.5 13.5" stroke="#bbbbbb" stroke-width="1" fill="none"/></svg>
<svg class="a" style="left:170px;top:915px" width="14" height="14" viewBox="0 0 14 14" shape-rendering="crispEdges"><path d="M6.5 0 V12.5 M1.5 3 V12.5 H11.5 M11.5 3 V13.5" stroke="#bbbbbb" stroke-width="1" fill="none"/></svg>
<svg class="a" style="left:184px;top:915px" width="14" height="14" viewBox="0 0 14 14" shape-rendering="crispEdges"><path d="M2.5 0 V14 M0 4.5 H4.5 M5 1.5 H13.5 M5.5 3.5 H12.5 V8.5 H5.5 Z M5.5 6 H12.5 M9 0 V13.5 H7.5 M4.5 10.5 H13.5 M6 11.5 L7 12.5" stroke="#bbbbbb" stroke-width="1" fill="none"/></svg>
<svg class="a" style="left:198px;top:915px" width="14" height="14" viewBox="0 0 14 14" shape-rendering="crispEdges"><path d="M6.5 0 V1.5 M1.5 4 V2.5 H12.5 V4 M5 3.5 L2.5 6 M4.5 5 H10 L7 7.5 L2 9 M6 7 L12.5 9 M1 9.5 H13 M3.5 10.5 H10.5 V13.5 H3.5 Z" stroke="#bbbbbb" stroke-width="1" fill="none"/></svg>
<svg class="a" style="left:1360px;top:480px" width="137" height="4" viewBox="0 0 137 4"><path d="M0 3 L2 1 L4 3 L6 1 L8 3 L10 1 L12 3 L14 1 L16 3 L18 1 L20 3 L22 1 L24 3 L26 1 L28 3 L30 1 L32 3 L34 1 L36 3 L38 1 L40 3 L42 1 L44 3 L46 1 L48 3 L50 1 L52 3 L54 1 L56 3 L58 1 L60 3 L62 1 L64 3 L66 1 L68 3 L70 1 L72 3 L74 1 L76 3 L78 1 L80 3 L82 1 L84 3 L86 1 L88 3 L90 1 L92 3 L94 1 L96 3 L98 1 L100 3 L102 1 L104 3 L106 1 L108 3 L110 1 L112 3 L114 1 L116 3 L118 1 L120 3 L122 1 L124 3 L126 1 L128 3 L130 1 L132 3 L134 1 L136 3" stroke="#948a66" fill="none" stroke-width="1"/></svg>
<div class="a ui" style="left:23.00px;top:13.23px;font-size:13px;line-height:14.52px;letter-spacing:0.078px;color:#e8e8e8;font-weight:normal;">google_go [C:\Users\</div>
<div class="a ui" style="left:171.00px;top:13.23px;font-size:13px;line-height:14.52px;letter-spacing:0.295px;color:#e8e8e8;font-weight:normal;">\go\src\google_go] - ...\retriever\mock\mock.go [google_go] - GoLand</div>
<div class="a ui" style="left:5.00px;top:35.23px;font-size:13px;line-height:14.52px;letter-spacing:-0.239px;color:#bbbbbb;font-weight:normal;">File</div>
<div class="a ui" style="left:36.00px;top:35.23px;font-size:13px;line-height:14.52px;letter-spacing:0.070px;color:#bbbbbb;font-weight:normal;">Edit</div>
<div class="a ui" style="left:72.00px;top:35.23px;font-size:13px;line-height:14.52px;letter-spacing:-0.518px;color:#bbbbbb;font-weight:normal;">View</div>
<div class="a ui" style="left:110.00px;top:35.23px;font-size:13px;line-height:14.52px;letter-spacing:0.417px;color:#bbbbbb;font-weight:normal;">Navigate</div>
<div class="a ui" style="left:176.00px;top:35.23px;font-size:13px;line-height:14.52px;letter-spacing:-0.283px;color:#bbbbbb;font-weight:normal;">Code</div>
<div class="a ui" style="left:218.00px;top:35.23px;font-size:13px;line-height:14.52px;letter-spacing:-0.115px;color:#bbbbbb;font-weight:normal;">Refactor</div>
<div class="a ui" style="left:279.00px;top:35.23px;font-size:13px;line-height:14.52px;letter-spacing:-0.309px;color:#bbbbbb;font-weight:normal;">Run</div>
<div class="a ui" style="left:315.00px;top:35.23px;font-size:13px;line-height:14.52px;letter-spacing:0.038px;color:#bbbbbb;font-weight:normal;">Tools</div>
<div class="a ui" style="left:360.00px;top:35.23px;font-size:13px;line-height:14.52px;letter-spacing:-2.030px;color:#bbbbbb;font-weight:normal;">VCS</div>
<div class="a ui" style="left:395.00px;top:35.23px;font-size:13px;line-height:14.52px;letter-spacing:0.030px;color:#bbbbbb;font-weight:normal;">Window</div>
<div class="a ui" style="left:453.00px;top:35.23px;font-size:13px;line-height:14.52px;letter-spacing:0.498px;color:#bbbbbb;font-weight:normal;">Help</div>
<div class="a ui" style="left:28.00px;top:61.23px;font-size:13px;line-height:14.52px;letter-spacing:-0.222px;color:#bbbbbb;font-weight:bold;">google_go</div>
<div class="a ui" style="left:124.00px;top:61.23px;font-size:13px;line-height:14.52px;letter-spacing:0.081px;color:#bbbbbb;font-weight:normal;">retriever</div>
<div class="a ui" style="left:205.00px;top:61.23px;font-size:13px;line-height:14.52px;letter-spacing:0.147px;color:#bbbbbb;font-weight:normal;">mock</div>
<div class="a ui" style="left:269.00px;top:61.23px;font-size:13px;line-height:14.52px;letter-spacing:0.350px;color:#bbbbbb;font-weight:normal;">mock.go</div>
<div class="a ui" style="left:1581.00px;top:61.23px;font-size:13px;line-height:14.52px;letter-spacing:0.181px;color:#bbbbbb;font-weight:normal;">go build main.go (1)</div>
<div class="a ui" style="left:15px;top:141px;transform-origin:0 0;transform:rotate(-90deg) translate(0.00px,-7.70px);font-size:12px;line-height:13.40px;letter-spacing:-0.151px;color:#bbbbbb">1: Project</div>
<div class="a ui" style="left:15px;top:887px;transform-origin:0 0;transform:rotate(-90deg) translate(0.00px,-7.70px);font-size:12px;line-height:13.40px;letter-spacing:-0.123px;color:#bbbbbb">7: Structure</div>
<div class="a ui" style="left:15px;top:986px;transform-origin:0 0;transform:rotate(-90deg) translate(0.00px,-7.70px);font-size:12px;line-height:13.40px;letter-spacing:0.210px;color:#bbbbbb">2: Favorites</div>
<div class="a ui" style="left:1908px;top:110px;transform-origin:0 0;transform:rotate(90deg) translate(0.00px,-5.70px);font-size:12px;line-height:13.40px;letter-spacing:-0.671px;color:#bbbbbb">Database</div>
<div class="a ui" style="left:61.00px;top:111.23px;font-size:13px;line-height:14.52px;letter-spacing:-0.222px;color:#bbbbbb;font-weight:bold;">google_go</div>
<div class="a ui" style="left:131.00px;top:111.23px;font-size:13px;line-height:14.52px;letter-spacing:0.000px;color:#8c8c8c;font-weight:normal;width:51.00px;overflow:hidden">C:\Users\</div>
<div class="a ui" style="left:79.00px;top:132.24px;font-size:13px;line-height:14.52px;letter-spacing:0.025px;color:#bbbbbb;font-weight:normal;">empty</div>
<div class="a ui" style="left:79.00px;top:153.24px;font-size:13px;line-height:14.52px;letter-spacing:0.081px;color:#bbbbbb;font-weight:normal;">retriever</div>
<div class="a ui" style="left:97.00px;top:174.24px;font-size:13px;line-height:14.52px;letter-spacing:0.147px;color:#bbbbbb;font-weight:normal;">mock</div>
<div class="a ui" style="left:115.00px;top:195.24px;font-size:13px;line-height:14.52px;letter-spacing:0.350px;color:#bbbbbb;font-weight:normal;">mock.go</div>
<div class="a ui" style="left:97.00px;top:216.24px;font-size:13px;line-height:14.52px;letter-spacing:0.163px;color:#bbbbbb;font-weight:normal;">main.go</div>
<div class="a ui" style="left:79.00px;top:237.24px;font-size:13px;line-height:14.52px;letter-spacing:-0.114px;color:#bbbbbb;font-weight:normal;">text</div>
<div class="a ui" style="left:79.00px;top:258.24px;font-size:13px;line-height:14.52px;letter-spacing:0.276px;color:#bbbbbb;font-weight:normal;">tree</div>
<div class="a ui" style="left:60.00px;top:279.24px;font-size:13px;line-height:14.52px;letter-spacing:-0.039px;color:#bbbbbb;font-weight:normal;">External Libraries</div>
<div class="a ui" style="left:79.00px;top:300.24px;font-size:13px;line-height:14.52px;letter-spacing:-0.351px;color:#bbbbbb;font-weight:normal;">Go SDK 1.12.4</div>
<div class="a ui" style="left:79.00px;top:321.24px;font-size:13px;line-height:14.52px;letter-spacing:0.000px;color:#bbbbbb;font-weight:normal;width:103.00px;overflow:hidden">GOPATH &lt;google_go&gt;</div>
<div class="a ui" style="left:97.00px;top:342.24px;font-size:13px;line-height:14.52px;letter-spacing:-0.415px;color:#bbbbbb;font-weight:normal;">src</div>
<div class="a ui" style="left:61.00px;top:363.24px;font-size:13px;line-height:14.52px;letter-spacing:0.000px;color:#bbbbbb;font-weight:normal;width:121.00px;overflow:hidden">Scratches and Consoles</div>
<div class="a ui" style="left:210.00px;top:88.23px;font-size:13px;line-height:14.52px;letter-spacing:0.163px;color:#bbbbbb;font-weight:normal;">main.go</div>
<div class="a ui" style="left:307.00px;top:88.23px;font-size:13px;line-height:14.52px;letter-spacing:0.350px;color:#bbbbbb;font-weight:normal;">mock.go</div>
<div class="a ui" style="left:1068.00px;top:88.23px;font-size:13px;line-height:14.52px;letter-spacing:0.163px;color:#bbbbbb;font-weight:normal;">main.go</div>
<div class="a ui" style="left:1246.00px;top:363.14px;font-size:12px;line-height:13.40px;letter-spacing:0.000px;color:#8a8a8a;font-weight:normal;width:18.00px;overflow:hidden">url:</div>
<div class="a ui" style="left:1295.00px;top:468.14px;font-size:12px;line-height:13.40px;letter-spacing:0.871px;color:#8a8a8a;font-weight:normal;">Contents:</div>
<div class="a ui" style="left:1107.00px;top:849.14px;font-size:12px;line-height:13.40px;letter-spacing:0.290px;color:#bbbbbb;font-weight:normal;">Retriever</div>
<div class="a ui" style="left:29.00px;top:874.14px;font-size:12px;line-height:13.40px;letter-spacing:0.329px;color:#bbbbbb;font-weight:normal;">Run:</div>
<div class="a ui" style="left:93.00px;top:874.14px;font-size:12px;line-height:13.40px;letter-spacing:0.681px;color:#bbbbbb;font-weight:normal;">go build main.go (1)</div>
<div class="a ui" style="left:33.00px;top:997.04px;font-size:11px;line-height:12.29px;letter-spacing:0.000px;color:#9a9a9a;font-weight:normal;width:8.00px;overflow:hidden">»</div>
<div class="a ui" style="left:62.00px;top:997.04px;font-size:11px;line-height:12.29px;letter-spacing:0.000px;color:#9a9a9a;font-weight:normal;width:8.00px;overflow:hidden">»</div>
<div class="a ui" style="left:48.00px;top:1021.14px;font-size:12px;line-height:13.40px;letter-spacing:-0.336px;color:#d0d0d0;font-weight:normal;">4: Run</div>
<div class="a ui" style="left:119.00px;top:1021.14px;font-size:12px;line-height:13.40px;letter-spacing:-0.743px;color:#bbbbbb;font-weight:normal;">6: TODO</div>
<div class="a ui" style="left:201.00px;top:1021.14px;font-size:12px;line-height:13.40px;letter-spacing:-0.097px;color:#bbbbbb;font-weight:normal;">Terminal</div>
<div class="a ui" style="left:1836.00px;top:1021.14px;font-size:12px;line-height:13.40px;letter-spacing:-0.171px;color:#bbbbbb;font-weight:normal;">Event Log</div>
<div class="a ui" style="left:31.00px;top:1042.14px;font-size:12px;line-height:13.40px;letter-spacing:0.577px;color:#bbbbbb;font-weight:normal;">Install 1 // Add to GOPATH Don&#x27;t show (11 minutes ago)</div>
<div class="a ui" style="left:1700.00px;top:1042.14px;font-size:12px;line-height:13.40px;letter-spacing:-0.561px;color:#bbbbbb;font-weight:normal;">10:1</div>
<div class="a ui" style="left:1734.00px;top:1042.14px;font-size:12px;line-height:13.40px;letter-spacing:-1.674px;color:#bbbbbb;font-weight:normal;">LF</div>
<div class="a ui" style="left:1771.00px;top:1042.14px;font-size:12px;line-height:13.40px;letter-spacing:-0.331px;color:#8c8c8c;font-weight:normal;">UTF-8</div>
<div class="a ui" style="left:1816.00px;top:1042.14px;font-size:12px;line-height:13.40px;letter-spacing:0.163px;color:#bbbbbb;font-weight:normal;">Tab</div>
</body></html>
